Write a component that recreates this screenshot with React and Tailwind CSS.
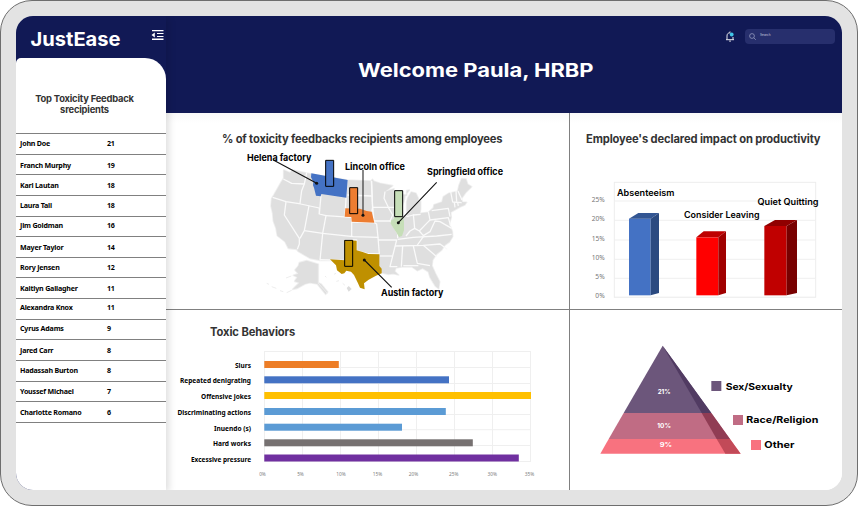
const recipients = [
  ['John Doe', 21, 'pb-[1px]'],
  ['Franch Murphy', 19, 'pt-[2px]'],
  ['Karl Lautan', 18, 'pb-[1px]'],
  ['Laura Tall', 18, 'pb-[1px]'],
  ['Jim Goldman', 16, 'pb-[2px]'],
  ['Mayer Taylor', 14, 'pt-[1px]'],
  ['Rory Jensen', 12, 'pb-[1px]'],
  ['Kaitlyn Gallagher', 11, 'pb-[1px]'],
  ['Alexandra Knox', 11, 'pb-[3px]'],
  ['Cyrus Adams', 9, 'pb-[2px]'],
  ['Jared Carr', 8, 'pb-[1px]'],
  ['Hadassah Burton', 8, 'pb-[1px]'],
  ['Youssef Michael', 7, 'pt-0'],
  ['Charlotte Romano', 6, 'pt-0'],
];

function Sidebar() {
  return (
    <aside className="relative z-10 flex w-[150px] shrink-0 flex-col bg-[#111955] shadow-[3px_2px_7px_rgba(0,0,0,0.13)]">
      <div className="flex h-[42px] shrink-0 items-start justify-between pl-[14px] pr-[2px]">
        <svg width="94" height="30" viewBox="0 0 94 30" className="mt-[6px]" aria-label="JustEase">
          <text x="0.5" y="24.3" textLength="90" lengthAdjust="spacingAndGlyphs" fill="#fff" fontSize="19" fontWeight="700" fontFamily="Inter, sans-serif">JustEase</text>
        </svg>
        <svg width="13" height="12" viewBox="0 0 13 12" fill="#fff" className="mt-[13px]">
          <path d="M1 1h11.500v1.200H1zM6 4h6.500v1H6zM6 6.900h6.500v1.100H6zM1 9.500h11.500v1.500H1zM0.500 6L3.800 3.600v4.800z" />
        </svg>
      </div>
      <div className="flex flex-1 flex-col rounded-tl-[5px] rounded-tr-[21px] bg-white">
        <h2 className="h-[75px] shrink-0 pl-0 pr-[13px] pt-[35px] text-center font-[Inter] text-[9.4px] font-bold leading-[11px] tracking-[-0.2px] text-[#333]">
          Top Toxicity Feedback<br />srecipients
        </h2>
        <ul className="border-t border-[#808080] font-['Noto_Sans'] text-[7.1px] font-bold leading-[10px] tracking-[-0.2px] text-black">
          {recipients.map(([name, count, shift]) => (
            <li key={name} className={'flex h-[20.63px] items-center border-b border-[#808080] pl-[4px] ' + shift}>
              <span className="w-[87px]">{name}</span>
              <span>{count}</span>
            </li>
          ))}
        </ul>
      </div>
    </aside>
  );
}

function Header() {
  return (
    <header className="relative flex h-[97px] shrink-0 justify-end bg-[#111955]">
      <h1 className="absolute left-[192px] top-[41px] whitespace-nowrap font-[Inter] text-[20px] font-bold leading-[26px] text-white">
        <svg width="240" height="30" viewBox="0 0 240 30">
          <text x="0" y="20" textLength="235.500" lengthAdjust="spacingAndGlyphs" fill="#fff" fontSize="19" fontWeight="700">Welcome Paula, HRBP</text>
        </svg>
      </h1>
      <div className="mr-[7px] mt-[13px] flex h-[15px] items-center gap-[10px]">
        <svg width="10" height="12" viewBox="0 0 10 12" fill="none" stroke="#fff" strokeWidth="0.9">
          <path d="M1 8.700h8M2 8.500V5c0-2 1-3.200 3-3.200M8 8.500V6M4.200 10.100h1.700M5 0.500v1.200" />
          <circle cx="6.700" cy="3.500" r="1.900" fill="#41c5e8" stroke="none" />
        </svg>
        <div className="flex h-[15px] w-[90px] items-center gap-[4px] rounded-[4px] bg-[#272f6d] pl-[4px]">
          <svg width="7" height="7" viewBox="0 0 7 7" fill="none" stroke="#a2a7c9" strokeWidth="0.7">
            <circle cx="3" cy="3" r="2.400" />
            <path d="M4.800 4.800L6.800 6.800" />
          </svg>
          <span className="pb-[3px] font-[Inter] text-[3.2px] leading-[4px] text-[#c3c6dd]">Search</span>
        </div>
      </div>
    </header>
  );
}

const borders = [
  'M220 177L245 190L283 192', 'M290 158L283 192L275 212L270 250', 'M188 232L228 245L272 252L328 264',
  'M228 245L223 285L268 355L268 372L262 388', 'M297 257L283 332L270 355', 'M283 332L338 340L430 350L505 352',
  'M328 264V282L348 287L338 340L330 421', 'M348 287L425 292V350', 'M333 226L328 282', 'M411 180L405 290',
  'M412 225L485 228', 'M484 183L488 262L535 262', 'M425 306L493 308L500 312L504 352L508 402',
  'M485 275L488 262L492 303L540 303', 'M525 215L522 235L535 262L548 285L540 303L563 340L563 355',
  'M504 360H560L548 408L540 440H562', 'M510 408H547', 'M578 378L574 440', 'M610 378L622 430L660 437',
  'M580 437H625', 'M563 358L610 352L680 348L725 343', 'M555 378L640 376L690 372L712 388', 'M640 376L680 410',
  'M610 283L614 325L600 333L588 348', 'M614 325L628 333L650 310L660 300L655 275', 'M660 300L715 293L722 318',
  'M628 333L640 347L660 335L675 303L690 305L725 325', 'M665 272L715 265L720 290', 'M640 350L620 378',
  'M722 215L728 246L755 248', 'M738 211L740 245', 'M744 213L756 240', 'M733 248L735 262', 'M743 248L745 258',
  'M404 360H440V392L470 400L508 402', 'M404 360L404 421L330 419', 'M590 290L610 285L632 283', 'M535 262L568 262', 'M485 183L488 275',
];

const siteLabels = [
  ['Helena factory', 247, 161, 64.5],
  ['Lincoln office', 345, 170.3, 60],
  ['Springfield office', 427, 175.3, 76],
  ['Austin factory', 381, 296.3, 62.5],
];

function FactoryMap() {
  return (
    <svg className="block h-[155px] w-[402px]" viewBox="167 152 402 155" fontFamily="Inter, sans-serif">
      <g transform="translate(210 120) scale(0.33333)" strokeLinejoin="round">
        <g fill="#dfdfdf" stroke="#f0f0f0" strokeWidth="5" paintOrder="stroke">
          <path d="M221 150L240 158L248 150L304 162L412 180L484 183L487 178L492 184L510 190L548 197L525 215L540 210L552 206L550 216L575 222L590 226V212L598 210L585 228L582 244L574 262L572 290H592L590 268L590 245L594 232L604 216L618 220L625 235L622 248L632 244V266L630 280L655 277L670 264L672 254L696 246L700 230L716 220L743 214L747 196L755 176L768 177L773 193L785 200L768 217L754 236L757 246L770 247L764 255L750 261L738 268L722 277L724 292L718 312L727 335L728 350L718 366L705 375L695 390L680 402L668 420L666 437L676 460L689 485L686 506L676 498L660 472L655 455L638 445L622 452L605 440L575 441L558 444L554 454L566 465L550 461L535 463L515 458L462 470L404 421L330 421L300 415L264 394L260 388L235 385L225 365L202 347L198 325L190 303L188 280L183 258L185 235L192 224L214 185L221 175Z" />
          <path d="M255 450L265 438L268 428L290 422L325 433V488L334 493L353 516L347 523L322 492L300 488L285 492L262 505L248 508L268 488L254 484L262 472L250 466L265 461Z" />
        </g>
        <g fill="none" stroke="#ededed" strokeWidth="3">
          <path d="M325 433V492M325 490L352 520M245 511L230 518M220 515L210 512M199 505L185 500M177 493L170 490M244 468L228 474" />
          <path d="M345 468L349 472M372 463L378 460M379 484L387 482M398 490L405 496" />
        </g>
        <path d="M410 504L416 498L425 507L416 515Z" fill="#dcdcdc" />
        <g fill="none" stroke="#fafafa" strokeWidth="3.800">{borders.map((d) => <path key={d} d={d} />)}</g>
        <path d="M304 160L413 180L409 233L334 222L332 229L318 227L312 203L309 196L310 185L303 172Z" fill="#4472c4" />
        <path d="M406 265L450 266L470 273L485 275L493 308L425 305L424 291L404 290Z" fill="#ed7d31" />
        <path d="M404 360L440 362V391L458 396L475 402L508 403V438L515 446V460L498 467L476 479L462 490L464 508L450 503L444 490L432 465L423 455L409 452L403 460L395 462L381 451L378 436L360 418L404 421Z" fill="#bf9000" />
        <path d="M553 290H578L582 302V331L576 348L567 351L560 339L548 321L541 309L544 301L552 297Z" fill="#c6deb8" />
        <g stroke="#000" strokeWidth="3">
          <rect x="347" y="121" width="24" height="78" fill="#4472c4" />
          <rect x="419" y="203" width="24" height="78" fill="#ed7d31" />
          <rect x="404" y="361" width="24" height="78" fill="#bf9000" />
          <rect x="554" y="212" width="24" height="78" fill="#c6deb8" />
        </g>
        <path d="M459 150V286" stroke="#333" strokeWidth="3.500" />
        <path d="M190 120L320 190M680 187L565 308M463 420L545 502" stroke="#111" strokeWidth="3.200" />
        <g fill="#111">
          <circle cx="320" cy="190" r="4.500" /><circle cx="459" cy="286" r="4.500" />
          <circle cx="565" cy="308" r="4.500" /><circle cx="463" cy="420" r="4.500" />
        </g>
      </g>
      <g fontSize="9.4" fontWeight="700">
        {siteLabels.map(([name, x, y, len]) => (
          <text key={name} x={x} y={y} textLength={len} lengthAdjust="spacingAndGlyphs">{name}</text>
        ))}
      </g>
    </svg>
  );
}

const impactBars = [
  { x: 207, w: 65, y: 296, tx: 235, rx: 297, ty: 279, front: '#4472c4', top: '#335693', side: '#2b4a80' },
  { x: 409, w: 66, y: 352, tx: 431, rx: 498, ty: 334, front: '#ff0000', top: '#be0000', side: '#a00000' },
  { x: 613, w: 67, y: 318, tx: 645, rx: 711, ty: 300, front: '#c00000', top: '#900000', side: '#780000' },
];
const impactTicks = [['25%', 243, 39], ['20%', 301, 39], ['15%', 360, 39], ['10%', 418, 39], ['5%', 475, 28], ['0%', 532, 28]];

function ImpactChart() {
  return (
    <svg className="block h-[155px] w-[271px]" viewBox="571 152 271 155">
      <g transform="translate(560 120) scale(0.33333)">
        <rect x="163" y="187" width="604" height="345" fill="none" stroke="#ededed" strokeWidth="3" />
        {impactTicks.map(([label, y, len]) => (
          <g key={label}>
            <path d={`M163 ${y}H767`} stroke="#efefef" strokeWidth="3" />
            <text x={134 - len} y={y + 2} textLength={len} lengthAdjust="spacingAndGlyphs" fontSize="21" fill="#777" fontFamily="Noto Sans, sans-serif">{label}</text>
          </g>
        ))}
        {impactBars.map((b) => (
          <g key={b.x}>
            <rect x={b.x} y={b.y} width={b.w} height={526 - b.y} fill={b.front} />
            <path d={`M${b.x} ${b.y}L${b.tx} ${b.ty}H${b.rx}L${b.x + b.w} ${b.y}Z`} fill={b.top} />
            <path d={`M${b.x + b.w} ${b.y}L${b.rx} ${b.ty}V519L${b.x + b.w} 526Z`} fill={b.side} />
          </g>
        ))}
      </g>
      <g fontSize="9" fontWeight="600" fontFamily="Inter, sans-serif">
        <text x="617" y="196" textLength="57.500" lengthAdjust="spacingAndGlyphs">Absenteeism</text>
        <text x="684" y="218.300" textLength="75.500" lengthAdjust="spacingAndGlyphs">Consider Leaving</text>
        <text x="757.500" y="205.200" textLength="61" lengthAdjust="spacingAndGlyphs">Quiet Quitting</text>
      </g>
    </svg>
  );
}

const behaviors = [
  ['Slurs', 361, 74.5, 16, '#ed7d26'],
  ['Repeated denigrating', 376.3, 184.7, 71, '#4472c4'],
  ['Offensive jokes', 392, 266.7, 50, '#ffc000'],
  ['Discriminating actions', 408, 181.5, 73.5, '#5b9bd5'],
  ['Inuendo (s)', 423.7, 137.7, 37, '#5b9bd5'],
  ['Hard works', 439.3, 208.5, 38, '#767171'],
  ['Excessive pressure', 454.5, 254.5, 60, '#7030a0'],
];
const rateTicks = [['0%', 262.5], ['5%', 300.5], ['10%', 341], ['15%', 377.5], ['20%', 413.5], ['25%', 453.7], ['30%', 492.3], ['35%', 529.5]];

function BehaviorChart() {
  return (
    <svg className="block h-[140px] w-[402px]" viewBox="167 345 402 140" fontFamily="Noto Sans, sans-serif">
      <g stroke="#efefef" strokeWidth="1">
        {[264.5, 302.5, 340.5, 378.5, 416.5, 454.5, 492.5, 530.5].map((x) => <path key={x} d={`M${x} 351V462`} />)}
        {[351.5, 367.5, 383.5, 398.5, 414.5, 429.7, 445.5, 461.5].map((y) => <path key={y} d={`M264 ${y}H531`} />)}
      </g>
      {behaviors.map(([name, y, w, len, color]) => (
        <g key={name}>
          <rect x="264.300" y={y} width={w} height="7" fill={color} />
          <text x={251 - len} y={y + 7} textLength={len} lengthAdjust="spacingAndGlyphs" fontSize="7.200" fontWeight="700">{name}</text>
        </g>
      ))}
      {rateTicks.map(([label, x]) => (
        <text key={label} x={x} y="476.300" textAnchor="middle" fontSize="4.800" fill="#808080">{label}</text>
      ))}
    </svg>
  );
}

function CausesPyramid() {
  return (
    <svg className="block h-[130px] w-[271px]" viewBox="571 340 271 130" fontFamily="Inter, sans-serif" fontWeight="700">
      <g transform="translate(580 320) scale(0.33333)">
        <path d="M248 77L131 279H394Z" fill="#6c567b" />
        <path d="M248 77L365 279H394Z" fill="#513b62" />
        <path d="M131 279H394L450 357H86Z" fill="#c06c84" />
        <path d="M365 279H394L450 357H410Z" fill="#903c54" />
        <path d="M86 357H450L482 401H61Z" fill="#f8727f" />
        <path d="M410 357H450L482 401H436Z" fill="#c24a58" />
        <rect x="394" y="183" width="30" height="30" fill="#6c567b" />
        <rect x="459" y="285" width="30" height="30" fill="#c06c84" />
        <rect x="513" y="360" width="30" height="30" fill="#f8727f" />
        <g fill="#fff" fontSize="20">
          <text x="233" y="223" textLength="39" lengthAdjust="spacingAndGlyphs">21%</text>
          <text x="232" y="325" textLength="41" lengthAdjust="spacingAndGlyphs">10%</text>
          <text x="239" y="382" textLength="37" lengthAdjust="spacingAndGlyphs">9%</text>
        </g>
        <g fontSize="27.500">
          <text x="437" y="209" textLength="201" lengthAdjust="spacingAndGlyphs">Sex/Sexualty</text>
          <text x="499" y="310" textLength="216" lengthAdjust="spacingAndGlyphs">Race/Religion</text>
          <text x="553" y="384" textLength="90" lengthAdjust="spacingAndGlyphs">Other</text>
        </g>
      </g>
    </svg>
  );
}

function Panel({ title, titleClass, className, children }) {
  return (
    <section className={'flex min-w-0 flex-col overflow-hidden ' + className}>
      {title && <h2 className={'shrink-0 whitespace-nowrap font-[Inter] text-[11.2px] font-bold leading-[14px] text-[#333] ' + titleClass}>{title}</h2>}
      {children}
    </section>
  );
}

export default function App() {
  return (
    <div className="h-[506px] w-[858px] overflow-hidden rounded-[32px] border border-[#6e6e6e] bg-[#e3e3e3] p-[15px]">
      <div className="flex h-[474px] w-[826px] overflow-hidden rounded-[17px] bg-white">
        <Sidebar />
        <main className="flex w-[676px] flex-col">
          <Header />
          <div className="grid flex-1 grid-cols-[404px_272px] grid-rows-[197px_180px] bg-[linear-gradient(#f8f8f8,#fff_10px)]">
            <Panel title="% of toxicity feedbacks recipients among employees" titleClass="h-[39px] pl-[55px] pt-[19px] tracking-[-0.17px]" className="border-b border-r border-[#808080] pl-px">
              <FactoryMap />
            </Panel>
            <Panel title="Employee's declared impact on productivity" titleClass="h-[39px] pl-[15px] pt-[19px] tracking-[-0.13px]" className="border-b border-[#808080] pl-px">
              <ImpactChart />
            </Panel>
            <Panel title="Toxic Behaviors" titleClass="h-[35px] pl-[43px] pt-[15px] tracking-[-0.1px]" className="border-r border-[#808080] pl-px">
              <BehaviorChart />
            </Panel>
            <Panel className="pl-px pt-[30px]">
              <CausesPyramid />
            </Panel>
          </div>
        </main>
      </div>
    </div>
  );
}
